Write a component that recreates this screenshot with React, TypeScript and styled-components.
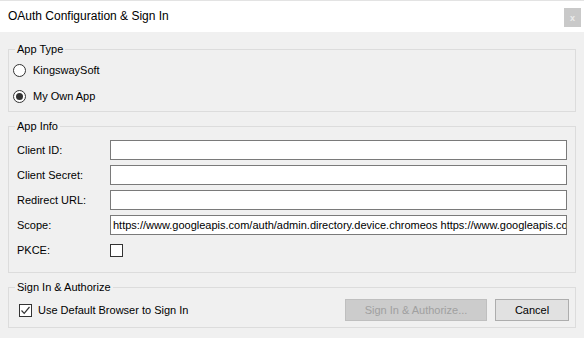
import { createGlobalStyle, styled } from "styled-components"

const GlobalStyle = createGlobalStyle`
  html, body {
    margin: 0;
    padding: 0;
    background: #f0f0f0;
  }
  * {
    box-sizing: border-box;
  }
`

const SCOPE =
  "https://www.googleapis.com/auth/admin.directory.device.chromeos https://www.googleapis.com/auth/admin.directory.user.readonly"

// 체크 표시
const CheckMark = () => (
  <svg width="11" height="11" viewBox="0 0 11 11">
    <path d="M1.5 5.5 L4.2 8.3 L9.5 2" fill="none" stroke="#333" strokeWidth="1.2" />
  </svg>
)

const App = () => {
  return (
    <Window>
      <GlobalStyle />
      <TitleBar>
        <Title>OAuth Configuration &amp; Sign In</Title>
        <CloseButton>x</CloseButton>
      </TitleBar>
      <Content>
        <Group $top={11}>
          <Legend>App Type</Legend>
          <RadioList>
            <OptionRow>
              <RadioCircle />
              <OptionText>KingswaySoft</OptionText>
            </OptionRow>
            <OptionRow>
              <RadioCircle $checked />
              <OptionText>My Own App</OptionText>
            </OptionRow>
          </RadioList>
        </Group>

        <Group $top={8}>
          <Legend>App Info</Legend>
          <FormGrid>
            <FieldLabel>Client ID:</FieldLabel>
            <TextBox />
            <FieldLabel>Client Secret:</FieldLabel>
            <TextBox />
            <FieldLabel>Redirect URL:</FieldLabel>
            <TextBox />
            <FieldLabel>Scope:</FieldLabel>
            <TextBox>{SCOPE}</TextBox>
            <FieldLabel>PKCE:</FieldLabel>
            <CheckCell>
              <CheckBox />
            </CheckCell>
          </FormGrid>
        </Group>

        <Group $top={8}>
          <Legend>Sign In &amp; Authorize</Legend>
          <ActionRow>
            <OptionRow>
              <CheckBox>
                <CheckMark />
              </CheckBox>
              <OptionText $gap={6}>Use Default Browser to Sign In</OptionText>
            </OptionRow>
            <Buttons>
              <DialogButton $disabled $width={142}>
                Sign In &amp; Authorize...
              </DialogButton>
              <DialogButton $width={74}>Cancel</DialogButton>
            </Buttons>
          </ActionRow>
        </Group>
      </Content>
    </Window>
  )
}

export default App

const Window = styled.div`
  width: 584px;
  height: 338px;
  display: flex;
  flex-direction: column;
  background: #f0f0f0;
  border-top: 1px solid #e3e3e3;
  font-family: "Liberation Sans", Arial, sans-serif;
  font-size: 11px;
  color: #000;
  overflow: hidden;
`

const TitleBar = styled.div`
  height: 31px;
  display: flex;
  align-items: center;
  justify-content: space-between;
  padding: 0 3px 0 8px;
  background: #fff;
`

const Title = styled.div`
  font-size: 12px;
  color: #000;
  padding-bottom: 1px;
`

const CloseButton = styled.div`
  width: 17px;
  height: 19px;
  margin-top: 2px;
  display: flex;
  align-items: center;
  justify-content: center;
  background: #c9c9c9;
  color: #ececec;
  font-size: 9px;
  font-weight: bold;
`

const Content = styled.div`
  display: flex;
  flex-direction: column;
  padding: 0 8px;
`

const Group = styled.fieldset<{ $top: number }>`
  margin: ${(p) => p.$top}px 0 0 0;
  padding: 0;
  border: 1px solid #dcdcdc;
  min-width: 0;
`

const Legend = styled.legend`
  margin-left: 6px;
  padding: 0 2px;
  height: 13px;
  line-height: 13px;
  font-size: 11px;
`

const RadioList = styled.div`
  display: flex;
  flex-direction: column;
  gap: 6px;
  padding: 4px 8px 5px 4px;
`

const OptionRow = styled.div`
  height: 20px;
  display: flex;
  align-items: center;
`

const RadioCircle = styled.span<{ $checked?: boolean }>`
  width: 13px;
  height: 13px;
  border-radius: 50%;
  border: 1px solid #333;
  background: #fff;
  display: flex;
  align-items: center;
  justify-content: center;
  flex-shrink: 0;

  &::after {
    content: "";
    display: ${(p) => (p.$checked ? "block" : "none")};
    width: 7px;
    height: 7px;
    border-radius: 50%;
    background: #333;
  }
`

const OptionText = styled.span<{ $gap?: number }>`
  margin-left: ${(p) => p.$gap ?? 7}px;
  white-space: nowrap;
`

const FormGrid = styled.div`
  display: grid;
  grid-template-columns: 93px 1fr;
  grid-auto-rows: 20px;
  row-gap: 5px;
  align-items: center;
  padding: 7px 8px 12px 8px;
`

const FieldLabel = styled.div`
  white-space: nowrap;
`

const TextBox = styled.div`
  height: 20px;
  border: 1px solid #7a7a7a;
  background: #fff;
  padding: 0 2px;
  line-height: 18px;
  white-space: nowrap;
  overflow: hidden;
`

const CheckCell = styled.div`
  display: flex;
  align-items: center;
`

const CheckBox = styled.span`
  width: 13px;
  height: 13px;
  border: 1px solid #333;
  background: #fff;
  display: flex;
  align-items: center;
  justify-content: center;
  flex-shrink: 0;
`

const ActionRow = styled.div`
  display: flex;
  align-items: center;
  justify-content: space-between;
  padding: 5px 6px 6px 10px;
`

const Buttons = styled.div`
  display: flex;
  gap: 8px;
`

const DialogButton = styled.div<{ $disabled?: boolean; $width: number }>`
  width: ${(p) => p.$width}px;
  height: 22px;
  display: flex;
  align-items: center;
  justify-content: center;
  border: 1px solid ${(p) => (p.$disabled ? "#bfbfbf" : "#adadad")};
  background: ${(p) => (p.$disabled ? "#cccccc" : "#e1e1e1")};
  color: ${(p) => (p.$disabled ? "#a0a0a0" : "#000")};
  font-size: 11px;
`
